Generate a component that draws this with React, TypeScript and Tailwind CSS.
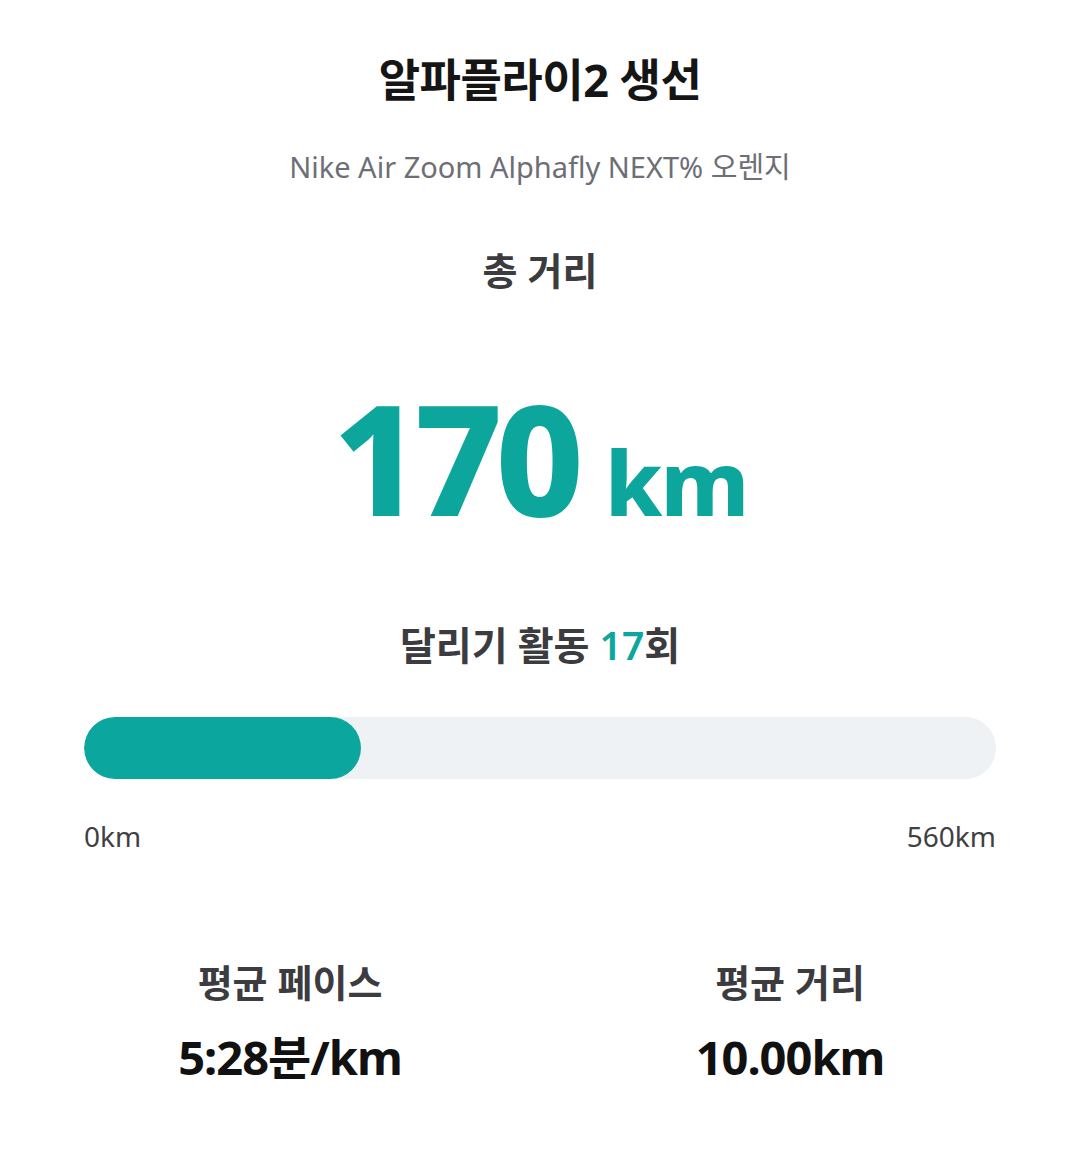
import React from "react";

export default function App() {
  const total = 170;
  const max = 560;
  const pct = (total / max) * 100;
  return (
    <div
      className="w-[1080px] h-[1149px] bg-white flex flex-col items-center"
      style={{ fontFamily: '"Noto Sans", "Open Sans", "Noto Sans CJK KR", sans-serif' }}
    >
      <h1 className="mt-[52px] text-[45px] leading-[56px] font-bold text-[#151515] tracking-[-0.5px]">
        알파플라이2 생선
      </h1>
      <p className="mt-[39px] text-[29px] leading-[40px] text-[#6e6e76]">
        Nike Air Zoom Alphafly NEXT% 오렌지
      </p>
      <p className="mt-[58px] text-[38px] leading-[50px] font-semibold text-[#3b3b40]">총 거리</p>
      <div className="mt-[85px] flex items-baseline text-[#0ca69d] font-extrabold leading-none">
        <span className="text-[153px] tracking-[-7px]">170</span>
        <span className="ml-[28px] text-[90px] tracking-[-2px]">km</span>
      </div>
      <p className="mt-[87px] text-[39px] leading-[50px] font-semibold text-[#3b3b40]">
        달리기 활동 <span className="text-[#0ca69d]">17</span>회
      </p>
      <div className="mt-[47px] w-[912px] h-[62px] rounded-full bg-[#eef2f5] overflow-hidden">
        <div className="h-full rounded-full bg-[#0ba69d]" style={{ width: `${pct}%` }} />
      </div>
      <div className="mt-[39px] w-[912px] flex justify-between text-[28px] leading-[36px] text-[#3f3f44]">
        <span>0km</span>
        <span>560km</span>
      </div>
      <div className="mt-[103px] w-[1000px] grid grid-cols-2">
        <div className="flex flex-col items-center">
          <span className="text-[38px] leading-[50px] font-semibold text-[#3b3b40]">평균 페이스</span>
          <span className="mt-[22px] text-[47px] leading-[56px] font-bold text-[#111111] tracking-[-1px]">
            5:28분/km
          </span>
        </div>
        <div className="flex flex-col items-center">
          <span className="text-[38px] leading-[50px] font-semibold text-[#3b3b40]">평균 거리</span>
          <span className="mt-[22px] text-[47px] leading-[56px] font-bold text-[#111111] tracking-[-1px]">
            10.00km
          </span>
        </div>
      </div>
    </div>
  );
}
